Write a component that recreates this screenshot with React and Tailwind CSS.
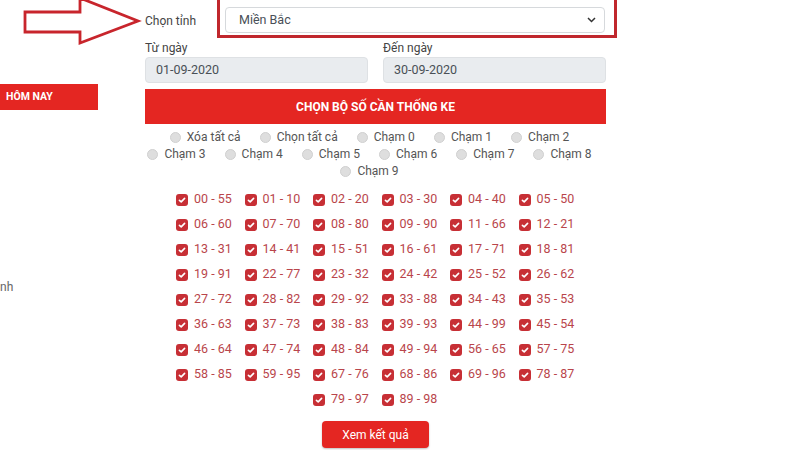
import React, { useState } from "react";

const PAIRS = [
  "00 - 55", "01 - 10", "02 - 20", "03 - 30", "04 - 40", "05 - 50",
  "06 - 60", "07 - 70", "08 - 80", "09 - 90", "11 - 66", "12 - 21",
  "13 - 31", "14 - 41", "15 - 51", "16 - 61", "17 - 71", "18 - 81",
  "19 - 91", "22 - 77", "23 - 32", "24 - 42", "25 - 52", "26 - 62",
  "27 - 72", "28 - 82", "29 - 92", "33 - 88", "34 - 43", "35 - 53",
  "36 - 63", "37 - 73", "38 - 83", "39 - 93", "44 - 99", "45 - 54",
  "46 - 64", "47 - 74", "48 - 84", "49 - 94", "56 - 65", "57 - 75",
  "58 - 85", "59 - 95", "67 - 76", "68 - 86", "69 - 96", "78 - 87",
  "79 - 97", "89 - 98",
];

const OPTIONS = [
  "Xóa tất cả", "Chọn tất cả", "Chạm 0", "Chạm 1", "Chạm 2",
  "Chạm 3", "Chạm 4", "Chạm 5", "Chạm 6", "Chạm 7", "Chạm 8", "Chạm 9",
];

function CheckIcon() {
  return (
    <svg width="12" height="12" viewBox="0 0 12 12" className="shrink-0">
      <rect x="0" y="0" width="12" height="12" rx="3" fill="#c72f35" />
      <path d="M3.4 6.3 L5.2 7.9 L8.6 4.4" fill="none" stroke="#fff" strokeWidth="1.6" strokeLinecap="round" strokeLinejoin="round" />
    </svg>
  );
}

function Radio({ label }) {
  return (
    <label className="flex items-center gap-[6px]">
      <span className="w-[11px] h-[11px] rounded-full bg-[#dedede] border border-[#d0d0d0]" />
      <span className="text-[12px] text-[#555] leading-[17px]">{label}</span>
    </label>
  );
}

export default function App() {
  const [checked] = useState(PAIRS);

  return (
    <div className="w-[800px] h-[450px] overflow-hidden bg-white flex" style={{ fontFamily: "Roboto, 'Liberation Sans', Arial, sans-serif" }}>
      {/* left column: pointer arrow + sidebar pieces */}
      <div className="w-[145px] shrink-0 flex flex-col">
        <svg width="145" height="45" viewBox="0 0 145 45" className="overflow-visible">
          <polygon
            points="25,12 80,12 80,-2 138,21 80,43 80,32 25,32"
            fill="#fff"
            stroke="#c8252c"
            strokeWidth="2.8"
            strokeLinejoin="miter"
          />
        </svg>
        <div className="mt-[39px] w-[98px] h-[26px] bg-[#e42622] flex items-center pl-[6px]">
          <span className="whitespace-nowrap text-white font-bold text-[10.5px]">HÔM NAY</span>
        </div>
        <span className="mt-[169px] text-[12px] text-[#666] leading-[16px]">nh</span>
      </div>

      {/* main form */}
      <div className="w-[461px] shrink-0 flex flex-col">
        <div className="flex items-start h-[41px]">
          <span className="w-[72px] shrink-0 pt-[12px] text-[12px] text-[#444]">Chọn tỉnh</span>
          <div className="w-[400px] shrink-0 mt-[-10px] border-[3px] border-[#c0272d] pt-[14px] pb-[2px] pl-[5px] pr-[9px]">
            <div className="h-[26px] bg-white border border-[#d6d9dc] rounded-[4px] flex items-center justify-between pl-[13px] pr-[8px]">
              <span className="text-[12.5px] text-[#495057]">Miền Bắc</span>
              <svg width="9" height="6" viewBox="0 0 9 6">
                <path d="M1 1 L4.5 4.5 L8 1" fill="none" stroke="#333" strokeWidth="1.5" />
              </svg>
            </div>
          </div>
        </div>

        <div className="flex gap-[15px]">
          <div className="flex-1 flex flex-col">
            <span className="text-[12px] text-[#444] leading-[14px]">Từ ngày</span>
            <div className="mt-[2px] h-[26px] bg-[#e9ecef] border border-[#dee1e4] rounded-[4px] flex items-center pl-[10px] text-[12.5px] text-[#495057]">
              01-09-2020
            </div>
          </div>
          <div className="flex-1 flex flex-col">
            <span className="text-[12px] text-[#444] leading-[14px]">Đến ngày</span>
            <div className="mt-[2px] h-[26px] bg-[#e9ecef] border border-[#dee1e4] rounded-[4px] flex items-center pl-[10px] text-[12.5px] text-[#495057]">
              30-09-2020
            </div>
          </div>
        </div>

        <div className="mt-[6px] h-[35px] bg-[#e42622] flex items-center justify-center text-white font-bold text-[12px]">
          CHỌN BỘ SỐ CẦN THỐNG KE
        </div>

        <div className="pt-[5px] flex flex-wrap justify-center gap-x-[19px] gap-y-0 pr-[12px]">
          {OPTIONS.map((o) => (
            <Radio key={o} label={o} />
          ))}
        </div>

        <div className="mt-[7px] flex flex-wrap justify-center pl-[31px] pr-[19px]">
          {checked.map((p) => (
            <div key={p} className="w-[68.5px] h-[25px] flex items-center gap-[6px]">
              <CheckIcon />
              <span className="text-[12.5px] text-[#b9454b] whitespace-nowrap">{p}</span>
            </div>
          ))}
        </div>

        <div className="mt-[9px] flex justify-center">
          <button className="w-[107px] h-[27px] bg-[#e42622] rounded-[4px] text-white text-[12px] shadow-[0_1px_2px_rgba(0,0,0,0.25)]">
            Xem kết quả
          </button>
        </div>
      </div>
    </div>
  );
}
